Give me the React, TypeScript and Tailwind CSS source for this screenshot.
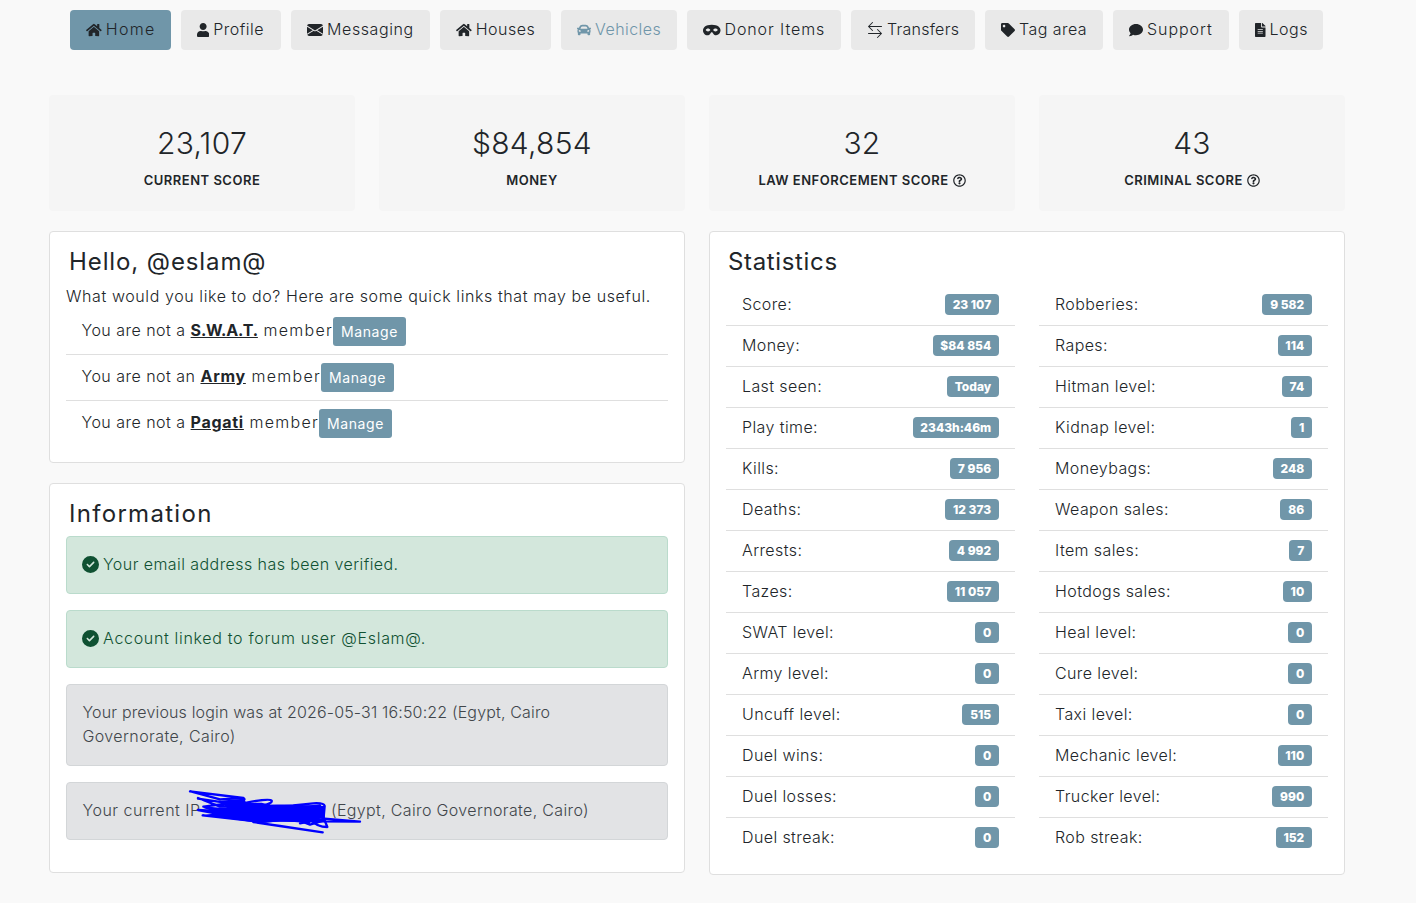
import type { ReactNode } from "react";
import {
  FaCar,
  FaComment,
  FaFileAlt,
  FaHome,
  FaMask,
  FaRegQuestionCircle,
  FaTag,
  FaUser,
} from "react-icons/fa";
import { FaCircleCheck } from "react-icons/fa6";
import { BsArrowLeftRight, BsEnvelopeFill } from "react-icons/bs";

type NavItem = {
  label: string;
  icon: ReactNode;
  className: string;
};

const navItems: NavItem[] = [
  { label: "Home", icon: <FaHome className="h-3.5 w-[15.75px]" />, className: "w-[101px] tracking-[1.3px] bg-[#7096a9] text-[#212529]" },
  { label: "Profile", icon: <FaUser className="h-3.5 w-[12.25px]" />, className: "w-[100px] tracking-[0.5px] bg-[#e9e9e9] text-[#212529]" },
  { label: "Messaging", icon: <BsEnvelopeFill className="h-4 w-4" />, className: "w-[139px] tracking-[0.6px] bg-[#e9e9e9] text-[#212529]" },
  { label: "Houses", icon: <FaHome className="h-3.5 w-[15.75px]" />, className: "w-[111px] tracking-[0.5px] bg-[#e9e9e9] text-[#212529]" },
  { label: "Vehicles", icon: <FaCar className="h-3.5 w-3.5" />, className: "w-[116px] tracking-[0.45px] bg-[#e9e9e9] text-[#7096a9]" },
  { label: "Donor Items", icon: <FaMask className="h-3.5 w-[17.5px]" />, className: "w-[154px] tracking-[0.9px] bg-[#e9e9e9] text-[#212529]" },
  { label: "Transfers", icon: <BsArrowLeftRight className="h-4 w-4" />, className: "w-[124px] tracking-[0.25px] bg-[#e9e9e9] text-[#212529]" },
  { label: "Tag area", icon: <FaTag className="h-3.5 w-3.5" />, className: "w-[118px] tracking-[0.45px] bg-[#e9e9e9] text-[#212529]" },
  { label: "Support", icon: <FaComment className="h-3.5 w-3.5" />, className: "w-[116px] tracking-[0.95px] bg-[#e9e9e9] text-[#212529]" },
  { label: "Logs", icon: <FaFileAlt className="h-3.5 w-[10.5px]" />, className: "w-[84px] tracking-[0.5px] bg-[#e9e9e9] text-[#212529]" },
];

const scores = [
  { value: "23,107", label: "CURRENT SCORE", help: false },
  { value: "$84,854", label: "MONEY", help: false },
  { value: "32", label: "LAW ENFORCEMENT SCORE", help: true },
  { value: "43", label: "CRIMINAL SCORE", help: true },
];

const groups = [
  { article: "a", name: "S.W.A.T.", className: "tracking-[-0.15px]" },
  { article: "an", name: "Army", className: "tracking-[0.7px]" },
  { article: "a", name: "Pagati", className: "tracking-[0.7px]" },
];

const leftStats = [
  ["Score:", "23 107"],
  ["Money:", "$84 854"],
  ["Last seen:", "Today"],
  ["Play time:", "2343h:46m"],
  ["Kills:", "7 956"],
  ["Deaths:", "12 373"],
  ["Arrests:", "4 992"],
  ["Tazes:", "11 057"],
  ["SWAT level:", "0"],
  ["Army level:", "0"],
  ["Uncuff level:", "515"],
  ["Duel wins:", "0"],
  ["Duel losses:", "0"],
  ["Duel streak:", "0"],
];

const rightStats = [
  ["Robberies:", "9 582"],
  ["Rapes:", "114"],
  ["Hitman level:", "74"],
  ["Kidnap level:", "1"],
  ["Moneybags:", "248"],
  ["Weapon sales:", "86"],
  ["Item sales:", "7"],
  ["Hotdogs sales:", "10"],
  ["Heal level:", "0"],
  ["Cure level:", "0"],
  ["Taxi level:", "0"],
  ["Mechanic level:", "110"],
  ["Trucker level:", "990"],
  ["Rob streak:", "152"],
];

const Card = ({ children, className }: { children: ReactNode; className: string }) => (
  <section className={`rounded border border-[#dfdfdf] bg-white px-4 pt-[15px] ${className}`}>
    {children}
  </section>
);

const StatList = ({ items }: { items: string[][] }) => (
  <ul className="flex-1">
    {items.map(([label, value]) => (
      <li
        key={label}
        className="flex h-[41px] items-start justify-between border-b border-[#dfdfdf] px-4 pt-[7px] tracking-[0.4px] last:h-10 last:border-b-0"
      >
        {label}
        <span className="mt-0.5 flex h-[21px] items-center rounded bg-[#7096a9] px-[7.8px] text-xs font-extrabold tracking-normal text-white">
          {value}
        </span>
      </li>
    ))}
  </ul>
);

const Scribble = () => (
  <svg
    viewBox="0 0 600 195"
    className="absolute -left-[23px] -top-[18px] h-[65px] w-[200px]"
    fill="none"
    stroke="#0000ff"
    strokeWidth="7"
    strokeLinecap="round"
    strokeLinejoin="round"
  >
    <path
      d="M118 62 L190 56 L200 68 L245 68 L275 76 L345 74 L385 76 L432 78 L434 112 L385 128 L300 124 L240 130 L190 122 L130 114 L72 106 L112 98 L70 84 L140 82 Z"
      fill="#0000ff"
      stroke="none"
    />
    <path d="M30 34 L190 54 L120 58 L32 34 M54 56 L190 76 L120 80 L54 54 M190 54 Q200 60 180 66 L70 80 L160 96 L54 90 L170 112 L68 106 L230 124" />
    <path d="M200 68 Q270 54 275 62 Q278 70 245 78 L340 76 L400 70 Q432 68 434 78 L430 122 L390 134 L350 118 L220 126 L428 157 L300 138 L230 128" />
    <path d="M350 84 L420 76 L360 100 L430 90 L355 118 L420 106 L360 130 L434 116 L540 125 L410 124 L250 120" />
    <path d="M428 106 L442 141 Q410 140 396 122 M388 90 L386 130" />
  </svg>
);

export default function App() {
  return (
    <div className="min-h-[903px] bg-[#f9f9f9] pt-2.5 font-['Inter',sans-serif] text-base leading-6 font-light text-[#212529]">
      {/* TOP NAV */}
      <nav className="ml-[70px] flex gap-2.5">
        {navItems.map((item) => (
          <a
            key={item.label}
            className={`flex h-10 shrink-0 cursor-pointer items-center gap-1 rounded pl-4 whitespace-nowrap ${item.className}`}
          >
            <span className="shrink-0">{item.icon}</span>
            <span className="pb-0.5">{item.label}</span>
          </a>
        ))}
      </nav>

      <main className="mt-[45px] ml-[49px] w-[1296px]">
        {/* SCORES */}
        <div className="grid grid-cols-4 gap-6">
          {scores.map((score) => (
            <div
              key={score.label}
              className="flex h-[116px] flex-col items-center rounded bg-[#f5f5f5] pt-[30px]"
            >
              <div className="text-[30px] leading-9 tracking-[0.3px]">{score.value}</div>
              <div className="mt-[9px] flex items-center gap-1 text-[13px] leading-5 font-semibold tracking-[0.5px]">
                {score.label}
                {score.help && <FaRegQuestionCircle className="h-[13px] w-[13px]" />}
              </div>
            </div>
          ))}
        </div>

        <div className="mt-5 flex items-start gap-6">
          <div className="w-[636px]">
            <Card className="h-[232px]">
              <h4 className="pl-[3px] text-2xl leading-[29px] font-normal tracking-[0.9px]">
                Hello, @eslam@
              </h4>
              <p className="mt-2 tracking-[0.59px]">
                What would you like to do? Here are some quick links that may be useful.
              </p>
              <ul className="pt-px">
                {groups.map((group) => (
                  <li
                    key={group.name}
                    className="flex h-[46px] items-start border-b border-[#dfdfdf] pt-2 pl-[15.5px] tracking-[0.48px] last:border-b-0"
                  >
                    <span className="pt-px whitespace-pre">
                      You are not {group.article}{" "}
                      <b className={`font-bold underline ${group.className}`}>{group.name}</b>
                      <span className="tracking-[1.25px]"> member</span>
                    </span>
                    <button className="h-[29px] rounded-[3px] bg-[#7096a9] px-2 text-sm font-normal tracking-[0.6px] text-white">
                      Manage
                    </button>
                  </li>
                ))}
              </ul>
            </Card>

            <Card className="mt-5 h-[390px]">
              <h4 className="h-[37px] pl-[3px] text-2xl leading-[29px] font-normal tracking-[1.3px]">
                Information
              </h4>
              <div className="flex flex-col gap-4">
                <div className="flex h-[58px] items-center gap-1 rounded border border-[#badbcc] bg-[#d3e7dc] px-[15px] tracking-[0.43px] text-[#0f5132]">
                  <FaCircleCheck className="mb-0.5 h-[17px] w-[17px]" />
                  <span className="pb-0.5">Your email address has been verified.</span>
                </div>
                <div className="flex h-[58px] items-center gap-1 rounded border border-[#badbcc] bg-[#d3e7dc] px-[15px] tracking-[0.68px] text-[#0f5132]">
                  <FaCircleCheck className="mb-0.5 h-[17px] w-[17px]" />
                  <span className="pb-0.5">Account linked to forum user @Eslam@.</span>
                </div>
                <div className="h-[82px] rounded border border-[#d3d6d8] bg-[#e2e3e5] px-[15.5px] pt-[15px] tracking-[0.16px] text-[#41464b]">
                  Your previous login was at 2026-05-31 16:50:22 (Egypt, Cairo
                  <br />
                  <span className="tracking-[0.4px]">Governorate, Cairo)</span>
                </div>
                <div className="flex h-[58px] rounded border border-[#d3d6d8] bg-[#e2e3e5] px-[15.5px] pt-[15px] tracking-[0.35px] text-[#41464b]">
                  <span className="w-[120.5px] shrink-0 tracking-[0.5px]">Your current IP</span>
                  <span className="relative w-32 shrink-0">
                    <Scribble />
                  </span>
                  (Egypt, Cairo Governorate, Cairo)
                </div>
              </div>
            </Card>
          </div>

          {/* STATISTICS */}
          <Card className="h-[644px] w-[636px]">
            <h4 className="pl-[2px] text-2xl leading-[29px] font-normal tracking-[0.65px]">
              Statistics
            </h4>
            <div className="mt-[9px] flex gap-6">
              <StatList items={leftStats} />
              <StatList items={rightStats} />
            </div>
          </Card>
        </div>
      </main>
    </div>
  );
}
